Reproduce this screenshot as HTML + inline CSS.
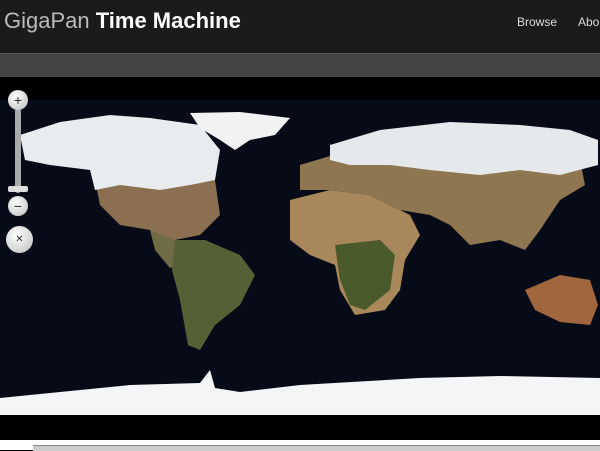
<!DOCTYPE html>
<html><head><style>
body{margin:0;width:600px;height:450px;overflow:hidden;background:#000;font-family:"Liberation Sans",sans-serif;position:relative}
.hdr{position:absolute;left:0;top:0;width:600px;height:53px;background:#1b1b1b}
.logo{position:absolute;left:4px;top:8px;font-size:22px;color:#bbb;letter-spacing:0}
.logo b{color:#fff}
.nav{position:absolute;top:15px;font-size:12px;color:#ddd}
.bar{position:absolute;left:0;top:53px;width:600px;height:23px;background:#444;border-top:1px solid #555}
.map{position:absolute;left:0;top:100px;width:600px;height:315px;background:#070b17}
.bot{position:absolute;left:0;top:440px;width:600px;height:10px;background:#fff}
.bot div{position:absolute;left:33px;top:5px;right:0;height:5px;background:#ccc;border-top:1px solid #888}
.btn{position:absolute;width:20px;height:20px;border-radius:50%;background:radial-gradient(circle at 40% 35%,#fff,#bbb);color:#333;font-size:14px;text-align:center;line-height:20px}
</style></head><body>
<div class="hdr"><div class="logo">GigaPan <b>Time Machine</b></div>
<div class="nav" style="left:517px">Browse</div><div class="nav" style="left:578px">About</div></div>
<div class="bar"></div>
<div class="map">
<svg width="600" height="315" viewBox="0 100 600 315">
<polygon fill="#8a7050" points="95,180 215,180 220,215 200,235 175,240 160,240 150,230 120,225 100,205"/>
<polygon fill="#6e6b45" points="150,230 175,240 185,265 170,268 155,250"/>
<polygon fill="#e8ecef" points="20,135 60,122 110,115 150,118 200,125 220,150 215,180 190,185 160,190 120,185 95,190 90,170 50,165 25,160"/>
<polygon fill="#f2f2f2" points="190,113 240,112 290,118 275,135 250,140 235,150 220,140 200,128"/>
<polygon fill="#556035" points="175,240 205,240 240,255 255,275 240,305 215,325 200,350 188,345 180,300 172,270"/>
<polygon fill="#a8875a" points="290,200 330,190 370,195 410,215 420,235 405,260 400,290 385,310 355,315 340,290 335,265 310,255 290,240"/>
<polygon fill="#4a5a2a" points="335,245 380,240 395,255 390,290 365,310 350,305 340,280"/>
<polygon fill="#8e7650" points="300,165 350,150 420,145 500,150 580,160 585,185 560,200 540,230 525,250 500,240 470,245 450,225 430,215 400,210 370,195 330,190 300,190"/>
<polygon fill="#e6e9ec" points="330,145 380,130 450,122 520,125 570,130 598,140 598,165 560,175 520,170 480,175 430,170 390,165 350,165 330,160"/>
<polygon fill="#a0673e" points="525,290 560,275 590,280 598,305 590,325 560,322 535,310"/>
<polygon fill="#f4f5f7" points="0,398 60,392 130,385 200,383 210,370 215,388 240,392 300,385 420,378 500,376 600,378 600,415 0,415"/>
</svg>
</div>
<div style="position:absolute;left:15px;top:108px;width:6px;height:85px;background:#aaa;border-radius:3px"></div>
<div style="position:absolute;left:8px;top:186px;width:20px;height:6px;background:#ddd;border-radius:2px"></div>
<div class="btn" style="left:8px;top:90px">+</div>
<div class="btn" style="left:8px;top:196px">−</div>
<div class="btn" style="left:6px;top:226px;width:27px;height:27px;line-height:27px;font-size:10px">✕</div>
<div class="bot"><div></div></div>
</body></html>
